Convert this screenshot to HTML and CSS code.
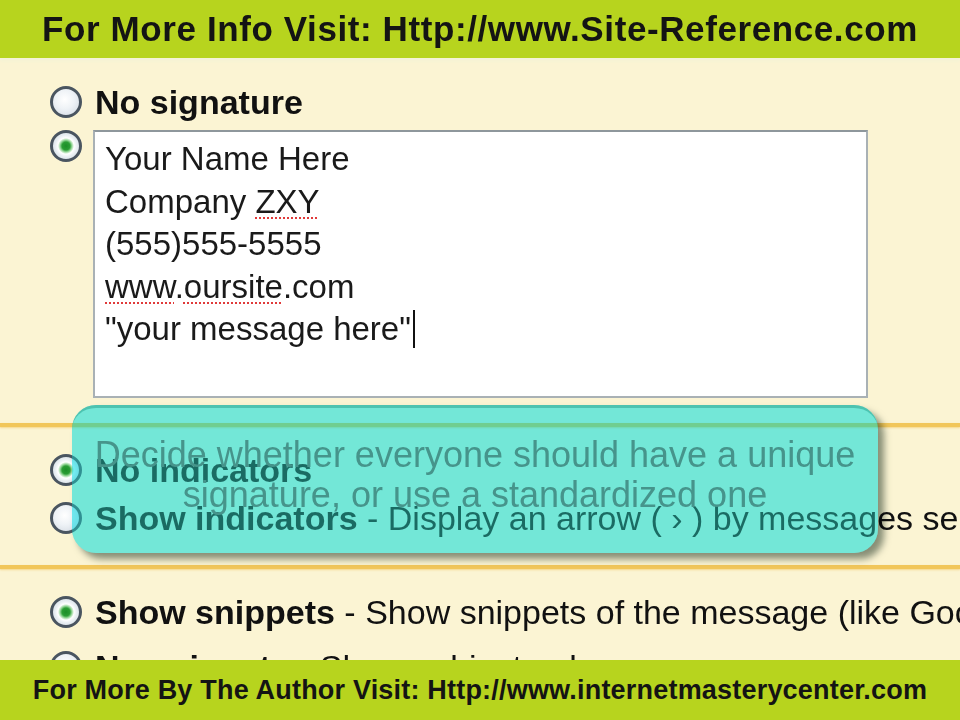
FILE: index.html
```html
<!DOCTYPE html>
<html lang="en">
<head>
<meta charset="utf-8">
<title>Signature settings</title>
<link rel="stylesheet" href="styles.css">
</head>
<body>
<div class="page">
  <header class="banner banner-top">For More Info Visit: Http://www.Site-Reference.com</header>
  <main class="content">
    <section class="sig">
      <div class="row row-first">
        <span class="radio"></span>
        <span class="label"><b>No signature</b></span>
      </div>
      <div class="row-sig">
        <span class="radio on"></span>
        <div class="sigbox">
          <div class="line">Your Name Here</div>
          <div class="line">Company <span class="spell">ZXY</span></div>
          <div class="line">(555)555-5555</div>
          <div class="line"><span class="spell">www</span>.<span class="spell">oursite</span>.com</div>
          <div class="line">"your message here"<span class="caret"></span></div>
        </div>
      </div>
    </section>
    <div class="sep"></div>
    <section class="ind">
      <div class="row">
        <span class="radio on"></span>
        <span class="label"><b>No indicators</b></span>
      </div>
      <div class="row">
        <span class="radio"></span>
        <span class="label"><b>Show indicators</b> - Display an arrow ( › ) by messages sent to my address (not a mailing list), and a double arrow ( » ) by messages sent only to me.</span>
      </div>
    </section>
    <div class="sep sep2"></div>
    <section class="snip">
      <div class="row">
        <span class="radio on"></span>
        <span class="label"><b>Show snippets</b> - Show snippets of the message (like Google web search!).</span>
      </div>
      <div class="row row-last">
        <span class="radio"></span>
        <span class="label"><b>No snippets</b> - Show subject only.</span>
      </div>
    </section>
    <div class="callout-tint"></div>
    <div class="callout">
      <p>Decide whether everyone should have a unique</p>
      <p>signature, or use a standardized one</p>
    </div>
  </main>
  <footer class="banner banner-bottom">For More By The Author Visit: Http://www.internetmasterycenter.com</footer>
</div>
</body>
</html>
```
FILE: styles.css
```css
html, body {
  margin: 0;
  padding: 0;
}
body {
  width: 960px;
  height: 720px;
  overflow: hidden;
  background: #fbf4d3;
  font-family: "Liberation Sans", Arial, sans-serif;
  color: #111;
}
.page {
  display: flex;
  flex-direction: column;
  height: 720px;
}
.banner {
  background: #b7d41e;
  font-weight: bold;
  color: #141414;
  text-align: center;
  white-space: nowrap;
  flex: none;
  position: relative;
  z-index: 2;
}
.banner-top {
  height: 58px;
  line-height: 58px;
  font-size: 35px;
  letter-spacing: 0.6px;
  box-shadow: 0 3px 3px #f4f3d6;
}
.banner-bottom {
  height: 60px;
  line-height: 60px;
  font-size: 27px;
  letter-spacing: 0.2px;
}
.content {
  flex: 1;
  position: relative;
  overflow: hidden;
}
.sig {
  padding-top: 26px;
}
.row {
  display: flex;
  align-items: center;
  gap: 13px;
  margin-left: 50px;
  height: 48px;
  white-space: nowrap;
}
.row-first {
  height: 36px;
  line-height: 36px;
}
.row-last {
  margin-top: 7px;
}
.label {
  font-size: 34px;
  line-height: 48px;
}
.row-first .label {
  line-height: 36px;
}
.radio {
  flex: none;
  box-sizing: border-box;
  width: 32px;
  height: 32px;
  border-radius: 50%;
  border: 3px solid #4a5560;
  background: radial-gradient(circle at 45% 40%, #ffffff 0, #eef2f6 45%, #cfd7e0 100%);
}
.radio.on {
  background: radial-gradient(circle at 50% 50%, #1c8e28 0, #2a9d34 4px, #9ad89c 6px, #ffffff 8px, #e8eef2 11px, #c9d3dc 100%);
}
.row-sig {
  display: flex;
  align-items: flex-start;
  gap: 11px;
  margin-left: 50px;
  margin-top: 10px;
}
.sigbox {
  box-sizing: border-box;
  width: 775px;
  height: 268px;
  background: #fff;
  border: 2px solid #a9b1b5;
  border-top-color: #8e979c;
  padding: 6px 10px;
  font-size: 33px;
  line-height: 42.5px;
  color: #1a1a1a;
}
.spell {
  text-decoration: underline dotted #e03a3a;
  text-decoration-thickness: 2px;
  text-underline-offset: 5px;
}
.caret {
  display: inline-block;
  width: 2px;
  height: 38px;
  background: #111;
  vertical-align: -8px;
  margin-left: 2px;
}
.sep {
  height: 4px;
  margin-top: 25px;
  background: #f1c65a;
  box-shadow: 0 1px 2px rgba(240, 195, 90, 0.6);
}
.ind {
  padding-top: 19px;
}
.sep2 {
  margin-top: 23px;
}
.snip {
  padding-top: 19px;
}
.callout-tint,
.callout {
  position: absolute;
  left: 72px;
  top: 347px;
  width: 806px;
  height: 148px;
  box-sizing: border-box;
  border-radius: 24px;
}
.callout-tint {
  background: rgb(162, 232, 255);
  mix-blend-mode: multiply;
  box-shadow: 6px 6px 7px rgba(40, 60, 50, 0.55);
}
.callout {
  background: rgba(50, 245, 222, 0.4);
  border-top: 3px solid rgba(60, 180, 160, 0.7);
  padding-top: 27px;
  text-align: center;
  color: #46948b;
  font-size: 36px;
  line-height: 40px;
  white-space: nowrap;
}
.callout p {
  margin: 0;
}
```
